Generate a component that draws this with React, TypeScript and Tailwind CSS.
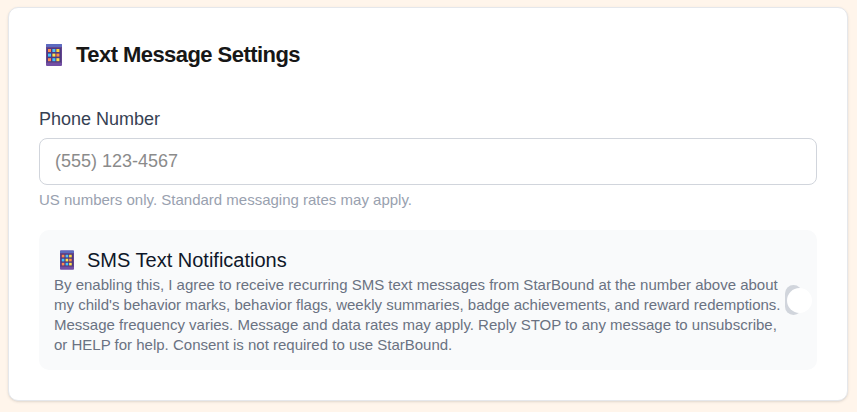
import { useState } from "react";

const KEY_COLORS = [
  "#ff8a50", "#4fc3f7", "#ffd740",
  "#40c4ff", "#ffe24a", "#ff8f45",
  "#ff8a50", "#40c4ff", "#ffe24a",
];

function PhoneIcon({ className }: { className: string }) {
  return (
    <svg viewBox="0 0 16 22" className={className} aria-hidden="true">
      <rect width="16" height="22" rx="1" fill="#734fa5" />
      <path d="M1 0h14a1 1 0 0 1 1 1v3H0V1a1 1 0 0 1 1-1z" fill="#5c6bc0" />
      <rect y="3" width="16" height="16" fill="#65458f" />
      <rect x="1" y="4" width="14" height="14" fill="#4e3a80" />
      {KEY_COLORS.map((color, i) => (
        <rect
          key={i}
          x={2 + (i % 3) * 4 + (i % 3 === 0 ? 0 : 0.4)}
          y={5 + Math.floor(i / 3) * 4.6}
          width="3"
          height="3"
          fill={color}
        />
      ))}
    </svg>
  );
}

export default function App() {
  const [phone, setPhone] = useState("");
  const [enabled, setEnabled] = useState(false);

  return (
    <main className="min-h-screen bg-[#fff5eb] px-2 pt-[7px] pb-[11px] font-['Liberation_Sans',Arial,sans-serif]">
      <section className="mr-px rounded-[10px] border border-gray-200 bg-white px-[30px] pt-[30px] pb-[30px] shadow-sm">
        <h2 className="flex items-center gap-[14px] pl-[7px] text-[22px] leading-[34px] font-bold tracking-tight text-[#171717]">
          <PhoneIcon className="h-[22px] w-4 shrink-0" />
          Text Message Settings
        </h2>

        <div className="mt-[34px]">
          <label htmlFor="phone" className="block pt-px text-lg leading-6 text-gray-700">
            Phone Number
          </label>
          <input
            id="phone"
            type="tel"
            value={phone}
            onChange={(e) => setPhone(e.target.value)}
            placeholder="(555) 123-4567"
            className="mt-[7px] block h-[47px] w-full rounded-lg border border-gray-300 bg-white px-[15px] text-lg text-gray-900 placeholder:text-[#8b8b8b]"
          />
          <p className="mt-[5px] text-[15px] leading-5 text-gray-400">
            US numbers only. Standard messaging rates may apply.
          </p>
        </div>

        <div className="mt-5 flex items-center rounded-[10px] bg-gray-50 px-[15px] py-[15px]">
          <div className="min-w-0 flex-1">
            <h3 id="sms-title" className="flex items-center gap-[13px] pl-[6px] text-xl leading-[30px] text-[#0f1729]">
              <PhoneIcon className="h-5 w-[14px] shrink-0" />
              SMS Text Notifications
            </h3>
            <p className="text-[15px] leading-5 text-gray-500">
              By enabling this, I agree to receive recurring SMS text messages from StarBound at the
              number above about my child's behavior marks, behavior flags, weekly summaries, badge
              achievements, and reward redemptions. Message frequency varies. Message and data rates
              may apply. Reply STOP to any message to unsubscribe, or HELP for help. Consent is not
              required to use StarBound.
            </p>
          </div>
          <button
            type="button"
            role="switch"
            aria-checked={enabled}
            aria-labelledby="sms-title"
            onClick={() => setEnabled(!enabled)}
            className={`flex h-[30px] w-[17px] shrink-0 items-center rounded-full pl-[2px] ${enabled ? "bg-orange-500" : "bg-gray-300"}`}
          >
            <span className="size-[25px] shrink-0 rounded-full bg-white" />
          </button>
        </div>
      </section>
    </main>
  );
}
